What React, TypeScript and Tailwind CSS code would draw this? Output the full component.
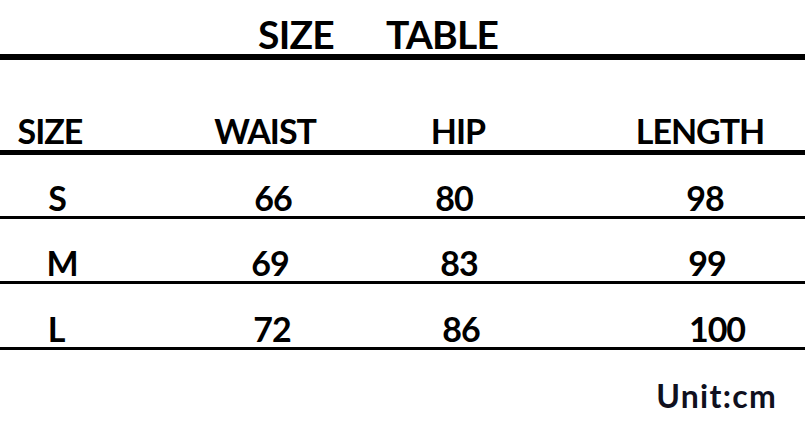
const rows = [
  {
    cells: [
      { text: 'S', cls: 'ml-[7px]' },
      { text: '66', cls: 'ml-[116px]' },
      { text: '80', cls: 'ml-[81px]' },
      { text: '98', cls: 'ml-[151px]' },
    ],
    rowCls: 'h-[64px] pt-[26px]',
  },
  {
    cells: [
      { text: 'M', cls: 'ml-[12px]' },
      { text: '69', cls: 'ml-[108px]' },
      { text: '83', cls: 'ml-[89px]' },
      { text: '99', cls: 'ml-[148px]' },
    ],
    rowCls: 'h-[65px] pt-[27px]',
  },
  {
    cells: [
      { text: 'L', cls: 'ml-[6px]' },
      { text: '72', cls: 'ml-[116px]' },
      { text: '86', cls: 'ml-[89px]' },
      { text: '100', cls: 'ml-[156px]' },
    ],
    rowCls: 'h-[66px] pt-[28px]',
  },
]

const header = [
  { text: 'SIZE', cls: 'ml-[0px]' },
  { text: 'WAIST', cls: 'ml-[115px]' },
  { text: 'HIP', cls: 'ml-[93px]' },
  { text: 'LENGTH', cls: 'ml-[142px]' },
]

function Cell({ text, cls }: { text: string; cls: string }) {
  return (
    <div className={`${cls} flex w-[100px] shrink-0 justify-center whitespace-nowrap`}>
      {text}
    </div>
  )
}

export default function App() {
  return (
    <div
      className="h-[424px] w-[805px] overflow-hidden bg-white text-black"
      style={{ fontFamily: 'Lato, "Open Sans", sans-serif' }}
    >
      {/* Title */}
      <div className="flex h-[54px] pt-[14px] text-[39px] font-bold leading-[40px] tracking-[-0.02em]">
        <div className="ml-[246px] flex w-[100px] justify-center">SIZE</div>
        <div className="ml-[46px] flex w-[100px] justify-center whitespace-nowrap">TABLE</div>
      </div>
      <div className="h-[6px] bg-black" />

      {/* Header */}
      <div className="flex h-[95px] border-b-[5px] border-black pt-[54px] text-[34px] font-bold leading-[34px] tracking-[-0.03em]">
        {header.map((c) => (
          <Cell key={c.text} text={c.text} cls={c.cls} />
        ))}
      </div>

      {/* Rows */}
      {rows.map((r, i) => (
        <div
          key={i}
          className={`${r.rowCls} flex border-b-[3px] border-black text-[34px] font-bold leading-[34px] tracking-[-0.03em]`}
        >
          {r.cells.map((c) => (
            <Cell key={c.text} text={c.text} cls={c.cls} />
          ))}
        </div>
      ))}

      <div className="flex justify-end pr-[28px] pt-[30px] text-[32px] font-bold leading-[32px] tracking-[0.04em] text-[#10101e]">
        Unit:cm
      </div>
    </div>
  )
}
